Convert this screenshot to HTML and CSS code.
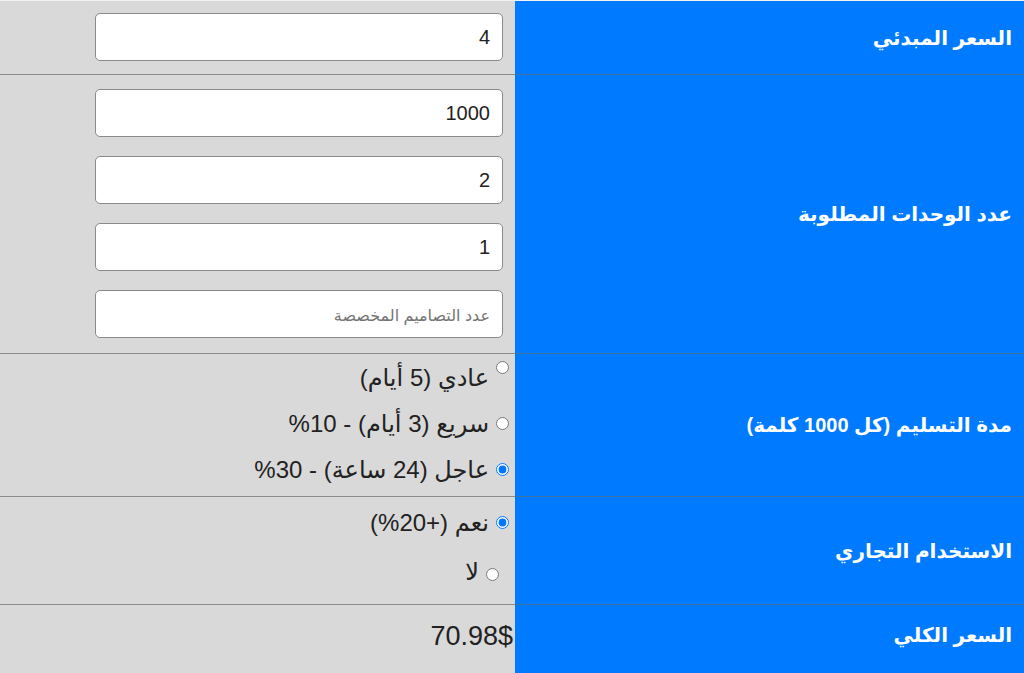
FILE: index.html
```html
<!DOCTYPE html>
<html lang="ar" dir="rtl">
<head>
    <meta charset="UTF-8">
    <meta name="viewport" content="width=device-width, initial-scale=1.0">
    <title>حاسبة السعر</title>
    <link rel="stylesheet" href="styles.css">
</head>
<body>
    <table class="calc">
        <tr>
            <th class="label">السعر المبدئي</th>
            <td class="field first">
                <input type="number" class="num" value="4">
            </td>
        </tr>
        <tr>
            <th class="label">عدد الوحدات المطلوبة</th>
            <td class="field units">
                <div class="stack">
                    <input type="number" class="num" value="1000">
                    <input type="number" class="num" value="2">
                    <input type="number" class="num" value="1">
                    <input type="number" class="num" placeholder="عدد التصاميم المخصصة">
                </div>
            </td>
        </tr>
        <tr>
            <th class="label">مدة التسليم (كل 1000 كلمة)</th>
            <td class="field delivery">
                <div class="options">
                    <label class="option raised"><input type="radio" name="delivery">عادي (5 أيام)</label>
                    <label class="option"><input type="radio" name="delivery">سريع (3 أيام) - 10%</label>
                    <label class="option"><input type="radio" name="delivery" checked>عاجل (24 ساعة) - 30%</label>
                </div>
            </td>
        </tr>
        <tr>
            <th class="label">الاستخدام التجاري</th>
            <td class="field commercial">
                <div class="options wide">
                    <label class="option"><input type="radio" name="commercial" checked>نعم (+20%)</label>
                    <label class="option indent"><input type="radio" name="commercial">لا</label>
                </div>
            </td>
        </tr>
        <tr>
            <th class="label total-label">السعر الكلي</th>
            <td class="field total">70.98$</td>
        </tr>
    </table>
</body>
</html>
```

FILE: styles.css
```css
* {
    margin: 0;
    padding: 0;
    box-sizing: border-box;
}

body {
    font-family: "Liberation Sans", Arial, "DejaVu Sans", sans-serif;
    background: #f2f2f2;
    color: #222;
}

.calc {
    width: 100%;
    margin-top: 1px;
    border-collapse: collapse;
}

.label {
    width: 509px;
    padding: 0 12px;
    background: #007bff;
    color: white;
    font-size: 20px;
    font-weight: bold;
    text-align: right;
    vertical-align: middle;
    border-bottom: 1px solid #41719f;
}

.label.total-label {
    vertical-align: top;
    padding-top: 18px;
}

.field {
    background: #d9d9d9;
    padding: 12px 12px 13px;
    text-align: right;
    vertical-align: top;
    border-bottom: 1px solid #8c8c8c;
}

.field.units {
    padding: 14px 12px 15px;
}

.stack {
    display: flex;
    flex-direction: column;
    gap: 19px;
}

.num {
    display: block;
    width: 408px;
    height: 48px;
    padding: 0 12px;
    border: 1px solid #8a8a8a;
    border-radius: 5px;
    background: white;
    font-family: inherit;
    font-size: 20px;
    color: #222;
    text-align: right;
    appearance: textfield;
    -moz-appearance: textfield;
}

.num::-webkit-inner-spin-button,
.num::-webkit-outer-spin-button {
    -webkit-appearance: none;
    margin: 0;
}

.num::placeholder {
    color: #757575;
    font-size: 16px;
}

.field.delivery {
    padding: 10px 6px 13px;
}

.field.commercial {
    padding: 12px 6px 19px;
}

.options {
    display: flex;
    flex-direction: column;
    gap: 19px;
}

.options.wide {
    gap: 22px;
}

.option {
    display: flex;
    align-items: center;
    gap: 7px;
    font-size: 24px;
    line-height: 27px;
}

.option input {
    width: 13px;
    height: 13px;
    margin: 0;
    flex-shrink: 0;
}

.option.raised {
    align-items: flex-start;
}

.option.raised input {
    margin-top: -3px;
}

.option.indent {
    padding-right: 10px;
}

.option.indent input {
    margin-top: 6px;
}

.field.total {
    padding: 16px 2px 40px;
    font-size: 27px;
    line-height: 30px;
}
```
